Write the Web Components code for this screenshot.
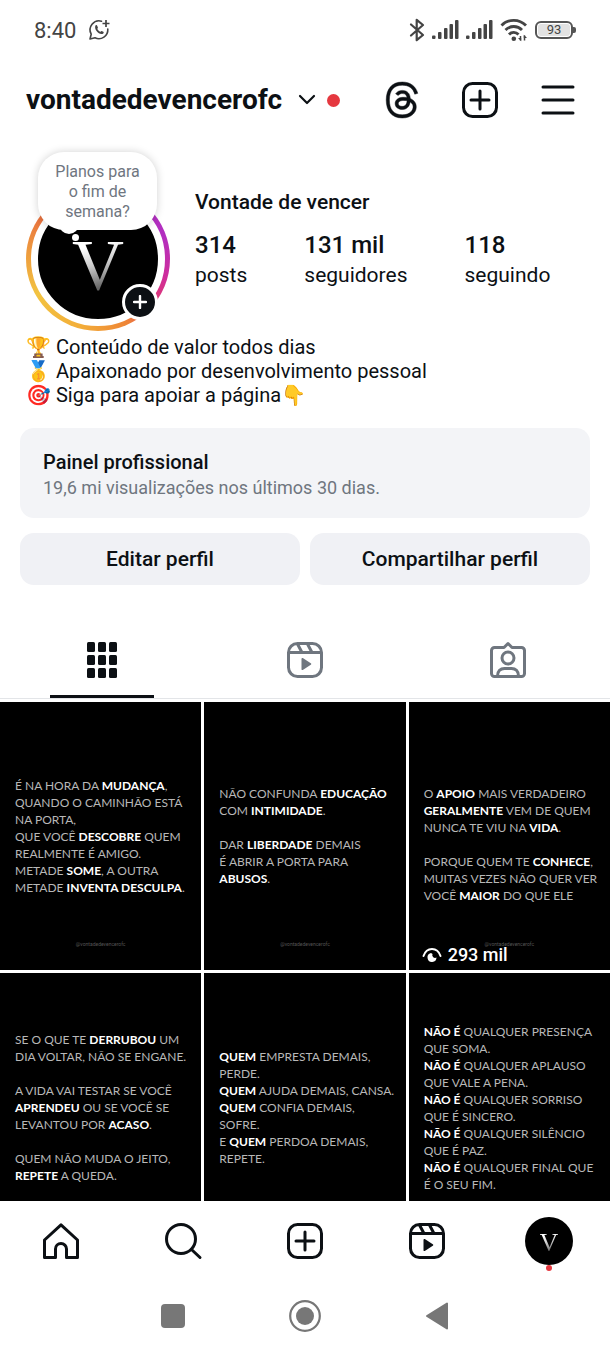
<!DOCTYPE html>
<html lang="pt-BR">
<head>
<meta charset="utf-8">
<meta name="viewport" content="width=device-width, initial-scale=1">
<title>vontadedevencerofc</title>
<style>
  :root {
    --ink: #0c1014;
    --muted: #6f767f;
    --surface: #f3f4f7;
    --red: #e5383f;
  }
  body {
    margin: 0;
    background: #fff;
    color: var(--ink);
    font-family: Roboto, "Liberation Sans", sans-serif;
  }
</style>
</head>
<body>
<app-shell>
  <status-bar slot="top" time="8:40" battery="93"></status-bar>
  <account-bar slot="top" user="vontadedevencerofc"></account-bar>

  <profile-summary name="Vontade de vencer">
    <profile-avatar slot="avatar">Planos para<br>o fim de<br>semana?</profile-avatar>
    <stat-item value="314">posts</stat-item>
    <stat-item value="131 mil">seguidores</stat-item>
    <stat-item value="118">seguindo</stat-item>
  </profile-summary>
  <profile-bio>
    <div>🏆 Conteúdo de valor todos dias</div>
    <div>🥇 Apaixonado por desenvolvimento pessoal</div>
    <div>🎯 Siga para apoiar a página👇</div>
  </profile-bio>
  <pro-panel heading="Painel profissional">19,6 mi visualizações nos últimos 30 dias.</pro-panel>
  <profile-actions></profile-actions>
  <profile-tabs></profile-tabs>
  <post-grid>
    <post-tile>É NA HORA DA <b>MUDANÇA</b>,<br>QUANDO O CAMINHÃO ESTÁ<br>NA PORTA,<br>QUE VOCÊ <b>DESCOBRE</b> QUEM<br>REALMENTE É AMIGO.<br>METADE <b>SOME</b>, A OUTRA<br>METADE <b>INVENTA DESCULPA</b>.</post-tile>
    <post-tile>NÃO CONFUNDA <b>EDUCAÇÃO</b><br>COM <b>INTIMIDADE</b>.<br><br>DAR <b>LIBERDADE</b> DEMAIS<br>É ABRIR A PORTA PARA<br><b>ABUSOS</b>.</post-tile>
    <post-tile views="293 mil"><br>O <b>APOIO</b> MAIS VERDADEIRO<br><b>GERALMENTE</b> VEM DE QUEM<br>NUNCA TE VIU NA <b>VIDA</b>.<br><br>PORQUE QUEM TE <b>CONHECE</b>,<br>MUITAS VEZES NÃO QUER VER<br>VOCÊ <b>MAIOR</b> DO QUE ELE</post-tile>
    <post-tile>SE O QUE TE <b>DERRUBOU</b> UM<br>DIA VOLTAR, NÃO SE ENGANE.<br><br>A VIDA VAI TESTAR SE VOCÊ<br><b>APRENDEU</b> OU SE VOCÊ SE<br>LEVANTOU POR <b>ACASO</b>.<br><br>QUEM NÃO MUDA O JEITO,<br><b>REPETE</b> A QUEDA.</post-tile>
    <post-tile><b>QUEM</b> EMPRESTA DEMAIS,<br>PERDE.<br><b>QUEM</b> AJUDA DEMAIS, CANSA.<br><b>QUEM</b> CONFIA DEMAIS,<br>SOFRE.<br>E <b>QUEM</b> PERDOA DEMAIS,<br>REPETE.</post-tile>
    <post-tile><b>NÃO É</b> QUALQUER PRESENÇA<br>QUE SOMA.<br><b>NÃO É</b> QUALQUER APLAUSO<br>QUE VALE A PENA.<br><b>NÃO É</b> QUALQUER SORRISO<br>QUE É SINCERO.<br><b>NÃO É</b> QUALQUER SILÊNCIO<br>QUE É PAZ.<br><b>NÃO É</b> QUALQUER FINAL QUE<br>É O SEU FIM.</post-tile>
  </post-grid>

  <bottom-nav slot="bottom"></bottom-nav>
  <system-nav slot="bottom"></system-nav>
</app-shell>

<script>
// name: [width, height, viewBox, markup]
const ICONS = {
  whatsapp: [22, 22, '0 0 22 22', `
    <path d="M13.5 2.2A9 9 0 0 0 3.2 15.2L2 20l5-1.2A9 9 0 0 0 19.8 10" fill="none" stroke="currentColor" stroke-width="1.6" stroke-linejoin="round" stroke-linecap="round"/>
    <path d="M18 1v7M14.500 4.500h7" stroke="currentColor" stroke-width="1.700"/>
    <path d="M7.500 6.500c.7-.7 1.500-.4 1.800.4l.6 1.500c.2.600-.8 1.200-.6 1.700.6 1.200 1.500 2 2.700 2.600.5.200 1.100-1 1.700-.8l1.600.8c.8.500.4 1.500-.3 2-3.500 2-9.500-4.500-7.500-8.200z" fill="currentColor"/>`],
  bluetooth: [16, 24, '0 0 16 24', `
    <path d="M2 6.500l12 10.500-6.300 5.200V1.800L14 7 2 17.500" fill="none" stroke="currentColor" stroke-width="2.200" stroke-linejoin="round" stroke-linecap="round"/>`],
  signal: [27, 20, '0 0 27 20', `
    <g fill="currentColor"><rect y="15.500" width="3.500" height="3.500" rx="1"/><rect x="6" y="12" width="3.500" height="7" rx="1"/><rect x="12" y="8" width="3.500" height="11" rx="1"/><rect x="17.500" y="4" width="3.500" height="15" rx="1"/><rect x="23" width="3.500" height="19" rx="1"/></g>`],
  wifi: [28, 24, '0 0 28 24', `
    <g fill="none" stroke="currentColor" stroke-width="2.800"><path d="M1.500 7.500a17 17 0 0 1 24.500 0"/><path d="M5.500 12a11.500 11.500 0 0 1 16.500 0"/><path d="M9 16.500a6.500 6.500 0 0 1 9.500 0"/></g>
    <circle cx="13.800" cy="20.800" r="2.300" fill="currentColor"/>
    <path d="M20.500 22.500v-4.500M24.500 17.500v5" stroke="currentColor" stroke-width="1.500"/><path d="M18 20h3.200v3.200zM27 20h-3.200v-3.200z" fill="currentColor"/>`],
  chevron: [18, 12, '0 0 18 12', `
    <path d="M2 2l7 7 7-7" fill="none" stroke="currentColor" stroke-width="2.200" stroke-linecap="round" stroke-linejoin="round"/>`],
  threads: [36, 36, '0 0 24 24', `
    <path stroke="currentColor" stroke-width=".3" d="M12.186 24h-.007c-3.581-.024-6.334-1.205-8.184-3.509C2.350 18.440 1.500 15.586 1.472 12.010v-.017c.03-3.579.879-6.430 2.525-8.482C5.845 1.205 8.600.024 12.180 0h.014c2.746.02 5.043.725 6.826 2.098 1.677 1.290 2.858 3.130 3.509 5.467l-2.040.569c-1.104-3.960-3.898-5.984-8.304-6.015-2.910.022-5.110.936-6.540 2.717C4.307 6.504 3.616 8.914 3.589 12c.027 3.086.718 5.496 2.057 7.164 1.430 1.783 3.631 2.698 6.540 2.717 2.623-.02 4.358-.631 5.800-2.045 1.647-1.613 1.618-3.593 1.090-4.798-.31-.71-.873-1.300-1.634-1.750-.192 1.352-.622 2.446-1.284 3.272-.886 1.102-2.140 1.704-3.730 1.790-1.202.065-2.361-.218-3.259-.801-1.063-.689-1.685-1.740-1.752-2.964-.065-1.190.408-2.285 1.330-3.082.88-.76 2.119-1.207 3.583-1.291a13.853 13.853 0 0 1 3.020.142c-.126-.742-.375-1.332-.75-1.757-.513-.586-1.308-.883-2.359-.89h-.029c-.844 0-1.992.232-2.721 1.320L7.734 7.847c.98-1.454 2.568-2.256 4.478-2.256h.044c3.194.02 5.097 1.975 5.287 5.388.108.046.216.094.321.142 1.490.7 2.580 1.761 3.154 3.070.797 1.820.871 4.790-1.548 7.158-1.850 1.810-4.094 2.628-7.277 2.650Zm1.003-11.690c-.242 0-.487.007-.739.021-1.836.103-2.980.946-2.916 2.143.067 1.256 1.452 1.839 2.784 1.767 1.224-.065 2.818-.543 3.086-3.710a10.500 10.500 0 0 0-2.215-.221z" fill="currentColor"/>`],
  add: [36, 36, '0 0 36 36', `
    <g fill="none" stroke="currentColor" stroke-width="3" stroke-linecap="round"><rect x="1.500" y="1.500" width="33" height="33" rx="9"/><path d="M18 9v18M9 18h18"/></g>`],
  menu: [36, 36, '0 0 36 36', `
    <path d="M3 5h30M3 18h30M3 31h30" stroke="currentColor" stroke-width="3" stroke-linecap="round"/>`],
  grid: [30, 36, '0 0 30 36', `
    <g fill="currentColor">${[0, 13, 26].map(y => [0, 11, 22].map(x => `<rect x="${x}" y="${y}" width="8" height="10" rx="1.500"/>`).join('')).join('')}</g>`],
  reels: [36, 36, '0 0 36 36', `
    <g fill="none" stroke="currentColor" stroke-width="3" stroke-linejoin="round"><rect x="1.500" y="1.500" width="33" height="33" rx="9"/><path d="M2 10.500h32M10.500 2l4.500 8.500M20.500 2l4.500 8.500"/></g>
    <path d="M14.500 16.800v10.400c0 .8.7 1.100 1.300.8l8-5.200c.6-.4.600-1.200 0-1.600l-8-5.200c-.6-.3-1.300 0-1.300.800z" fill="currentColor"/>`],
  tagged: [36, 36, '0 0 36 36', `
    <g fill="none" stroke="currentColor" stroke-width="3" stroke-linejoin="round"><path d="M18 1.500l4 4h9.500a3 3 0 0 1 3 3v23a3 3 0 0 1-3 3h-27a3 3 0 0 1-3-3v-23a3 3 0 0 1 3-3H14z"/><circle cx="18" cy="16" r="6"/><path d="M7.500 34c0-5 3-7.500 7-7.500h7c4 0 7 2.500 7 7.500"/></g>`],
  home: [36, 36, '0 0 36 36', `
    <path d="M18 1.800L34.500 17v17.500H23.500V26a5.500 5.500 0 0 0-11 0v8.500H1.500V17z" fill="none" stroke="currentColor" stroke-width="3" stroke-linejoin="round"/>`],
  search: [36, 36, '0 0 36 36', `
    <g fill="none" stroke="currentColor" stroke-width="3" stroke-linecap="round"><circle cx="16" cy="16" r="14.500"/><path d="M26.500 26.500L35 34.500"/></g>`],
  eye: [20, 16, '0 0 20 16', `
    <path d="M1.500 9C3 4.500 6 2 10 2s7 2.500 8.500 7" fill="none" stroke="currentColor" stroke-width="2" stroke-linecap="round"/>
    <path d="M9 6a4.500 4.500 0 1 0 5.500 4.500 2.800 2.800 0 0 1-4-3.500z" fill="currentColor"/>`],
  square: [24, 24, '0 0 24 24', `<rect x="0" y="0" width="24" height="24" rx="4" fill="currentColor"/>`],
  circle: [32, 32, '0 0 32 32', `
    <circle cx="16" cy="16" r="14.800" fill="none" stroke="currentColor" stroke-width="2.200"/><circle cx="16" cy="16" r="9" fill="currentColor"/>`],
  back: [24, 28, '0 0 24 28', `
    <path d="M22 1.500v25L2 14z" fill="currentColor" stroke="currentColor" stroke-width="2" stroke-linejoin="round"/>`],
};

const BUTTON_RESET = `
  button, a { display: inline-flex; align-items: center; justify-content: center; padding: 0; border: 0;
    background: none; color: inherit; font: inherit; text-decoration: none; cursor: pointer; }
`;

// Shared base: subclasses return their shadow markup from view()
class BaseElement extends HTMLElement {
  connectedCallback() {
    if (this.shadowRoot) return;
    this.attachShadow({ mode: 'open' }).innerHTML = this.view();
  }
  attr(name) { return this.getAttribute(name) || ''; }
}

customElements.define('app-icon', class extends BaseElement {
  view() {
    const [w, h, box, markup] = ICONS[this.attr('name')];
    return `
      <style>:host { display: inline-flex; flex: none; } svg { display: block; overflow: visible; }</style>
      <svg width="${w}" height="${h}" viewBox="${box}" aria-hidden="true">${markup}</svg>`;
  }
});

customElements.define('app-shell', class extends BaseElement {
  view() {
    return `
      <style>
        :host { display: flex; flex-direction: column; height: 100vh; }
        header, footer { flex: none; }
        main { flex: 1; min-height: 0; overflow: hidden; }
      </style>
      <header><slot name="top"></slot></header>
      <main><slot></slot></main>
      <footer><slot name="bottom"></slot></footer>`;
  }
});

customElements.define('status-bar', class extends BaseElement {
  view() {
    return `
      <style>
        :host { display: flex; align-items: center; height: 60px; padding: 0 34px; color: #444; }
        .time { font-size: 22px; margin-right: 12px; }
        .right { display: flex; align-items: center; gap: 7px; margin-left: auto; }
        .battery { display: flex; align-items: center; }
        .cell { box-sizing: border-box; width: 38px; height: 18px; padding: 1px; border: 2px solid #555; border-radius: 6px;
          font-size: 13px; line-height: 12px; text-align: center; }
        .cell span { display: block; background: #e2e2e2; border-radius: 3px; }
        .tip { width: 3px; height: 6px; background: #555; border-radius: 0 2px 2px 0; }
      </style>
      <span class="time">${this.attr('time')}</span>
      <app-icon name="whatsapp"></app-icon>
      <div class="right">
        <app-icon name="bluetooth"></app-icon>
        <app-icon name="signal"></app-icon>
        <app-icon name="signal"></app-icon>
        <app-icon name="wifi"></app-icon>
        <div class="battery"><div class="cell"><span>${this.attr('battery')}</span></div><div class="tip"></div></div>
      </div>`;
  }
});

customElements.define('account-bar', class extends BaseElement {
  view() {
    return `
      <style>
        ${BUTTON_RESET}
        :host { display: flex; align-items: center; height: 80px; padding: 0 34px 0 26px; }
        .user { font-size: 28px; font-weight: 700; line-height: 36px; }
        .user app-icon { margin: 0 11px 0 16px; }
        .dot { width: 13px; height: 13px; border-radius: 50%; background: var(--red); }
        nav { display: flex; gap: 42px; margin-left: auto; }
      </style>
      <button class="user">${this.attr('user')}<app-icon name="chevron"></app-icon><span class="dot"></span></button>
      <nav>
        <button aria-label="Threads"><app-icon name="threads"></app-icon></button>
        <button aria-label="Criar"><app-icon name="add"></app-icon></button>
        <button aria-label="Menu"><app-icon name="menu"></app-icon></button>
      </nav>`;
  }
});

customElements.define('brand-photo', class extends BaseElement {
  view() {
    return `
      <style>
        :host { display: flex; align-items: center; justify-content: center; border-radius: 50%; background: #000; }
        span { padding-top: 10%; font-family: "Liberation Serif", serif; line-height: 1;
          background: linear-gradient(165deg, #fff 35%, #ccc 55%, #666 80%); background-clip: text; -webkit-background-clip: text; color: transparent; }
      </style>
      <span>V</span>`;
  }
});

customElements.define('profile-avatar', class extends BaseElement {
  view() {
    return `
      <style>
        ${BUTTON_RESET}
        :host { display: block; position: relative; margin-top: 47px; }
        .ring { box-sizing: border-box; width: 144px; height: 144px; padding: 5px; border-radius: 50%;
          background: conic-gradient(#b22fc0, #b22fc0 70deg, #cf2d9b 105deg, #e03a6c 130deg, #ee8436 155deg, #f3ae39 195deg, #f2c341 240deg, #ee9c3e 275deg, #e9733f 305deg, #e9733f); }
        brand-photo { width: 120px; height: 120px; border: 7px solid #fff; font-size: 72px; }
        .note { position: absolute; left: 12px; top: -35px; box-sizing: border-box; width: 119px; padding: 10px 0 8px;
          border-radius: 26px; background: #fff; box-shadow: 0 0 8px #0000002e; color: var(--muted);
          font-size: 16px; line-height: 20px; text-align: center; clip-path: inset(-10px -10px 0 -10px); }
        .tail { position: absolute; left: 33px; top: 36px; width: 20px; height: 11px; border-radius: 0 0 10px 10px; background: #fff; }
        .drop { position: absolute; left: 46px; top: 47px; width: 7px; height: 7px; border-radius: 50%; background: #fff; }
        .plus { position: absolute; right: 12px; bottom: 11px; width: 36px; height: 36px; border: 3px solid #fff;
          box-sizing: border-box; border-radius: 50%; background: var(--ink); color: #fff; }
      </style>
      <div class="ring"><brand-photo></brand-photo></div>
      <div class="tail"></div><div class="drop"></div>
      <div class="note"><slot></slot></div>
      <button class="plus" aria-label="Adicionar story">
        <svg width="14" height="14" viewBox="0 0 14 14"><path d="M7 1v12M1 7h12" stroke="#fff" stroke-width="2.400" stroke-linecap="round"/></svg>
      </button>`;
  }
});

customElements.define('profile-summary', class extends BaseElement {
  view() {
    return `
      <style>
        :host { display: flex; align-items: flex-end; gap: 25px; padding: 0 26px; }
        .info { padding-bottom: 42px; }
        h1 { margin: 0 0 15px; font-size: 21px; line-height: 24px; font-weight: 500; }
        .stats { display: flex; gap: 57px; }
      </style>
      <slot name="avatar"></slot>
      <div class="info">
        <h1>${this.attr('name')}</h1>
        <div class="stats"><slot></slot></div>
      </div>`;
  }
});

customElements.define('stat-item', class extends BaseElement {
  view() {
    return `
      <style>
        :host { display: block; font-size: 21px; line-height: 28px; }
        strong { display: block; font-size: 24px; line-height: 32px; font-weight: 500; }
      </style>
      <strong>${this.attr('value')}</strong><slot></slot>`;
  }
});

customElements.define('profile-bio', class extends BaseElement {
  view() {
    return `
      <style>:host { display: block; margin: 4px 26px 21px; font-size: 20px; line-height: 24px; }</style>
      <slot></slot>`;
  }
});

customElements.define('pro-panel', class extends BaseElement {
  view() {
    return `
      <style>
        :host { display: block; margin: 0 20px 15px; padding: 20px 23px 18px; border-radius: 14px; background: var(--surface); }
        h2 { margin: 0; font-size: 20px; line-height: 28px; font-weight: 500; }
        p { margin: 0; font-size: 18px; line-height: 24px; color: var(--muted); }
      </style>
      <h2>${this.attr('heading')}</h2>
      <p><slot></slot></p>`;
  }
});

customElements.define('profile-actions', class extends BaseElement {
  view() {
    return `
      <style>
        :host { display: grid; grid-template-columns: 1fr 1fr; gap: 10px; margin: 0 20px; }
        button { height: 52px; border: 0; border-radius: 14px; background: #f0f1f5; color: inherit;
          font: 500 21px/24px Roboto, "Liberation Sans", sans-serif; cursor: pointer; }
      </style>
      <button>Editar perfil</button>
      <button>Compartilhar perfil</button>`;
  }
});

customElements.define('profile-tabs', class extends BaseElement {
  view() {
    return `
      <style>
        ${BUTTON_RESET}
        :host { display: grid; grid-template-columns: repeat(3, 1fr); margin: 36px 0 3px; border-bottom: 1px solid #e3e5e8; color: var(--muted); }
        button { box-sizing: border-box; width: 104px; height: 77px; padding-top: 4px; border-bottom: 3px solid transparent; justify-self: center; }
        .active { color: var(--ink); border-color: var(--ink); }
      </style>
      <button class="active" aria-label="Posts"><app-icon name="grid"></app-icon></button>
      <button aria-label="Reels"><app-icon name="reels"></app-icon></button>
      <button aria-label="Marcados"><app-icon name="tagged"></app-icon></button>`;
  }
});

customElements.define('post-grid', class extends BaseElement {
  view() {
    return `
      <style>:host { display: grid; grid-template-columns: repeat(3, 1fr); gap: 3px; }</style>
      <slot></slot>`;
  }
});

customElements.define('post-tile', class extends BaseElement {
  view() {
    const views = this.attr('views');
    return `
      <style>
        :host { position: relative; display: flex; align-items: center; aspect-ratio: 3 / 4; min-width: 0; background: #000; color: #fff; }
        p { margin: 0 0 0 15px; font: 400 12px/17px Lato, "Open Sans", sans-serif; white-space: nowrap; color: #b8b8b8; }
        ::slotted(b) { font-weight: 700; color: #fff; }
        .mark { position: absolute; left: 0; right: 0; bottom: 22px; font-size: 5px; line-height: 8px; text-align: center; color: #555; }
        .views { position: absolute; left: 13px; bottom: 4px; display: flex; align-items: center; gap: 6px; font-size: 18px; line-height: 22px; font-weight: 500; }
      </style>
      <p><slot></slot></p>
      <span class="mark">@vontadedevencerofc</span>
      ${views ? `<span class="views"><app-icon name="eye"></app-icon>${views}</span>` : ''}`;
  }
});

customElements.define('bottom-nav', class extends BaseElement {
  view() {
    return `
      <style>
        ${BUTTON_RESET}
        :host { display: grid; grid-template-columns: repeat(5, 1fr); height: 79px; background: #fff; }
        a { position: relative; }
        brand-photo { width: 48px; height: 48px; font-size: 26px; }
        .dot { position: absolute; bottom: 9px; width: 6px; height: 6px; border-radius: 50%; background: var(--red); }
      </style>
      <a href="#home" aria-label="Início"><app-icon name="home"></app-icon></a>
      <a href="#search" aria-label="Pesquisar"><app-icon name="search"></app-icon></a>
      <a href="#new" aria-label="Criar"><app-icon name="add"></app-icon></a>
      <a href="#reels" aria-label="Reels"><app-icon name="reels"></app-icon></a>
      <a href="#profile" aria-label="Perfil"><brand-photo></brand-photo><span class="dot"></span></a>`;
  }
});

customElements.define('system-nav', class extends BaseElement {
  view() {
    return `
      <style>
        ${BUTTON_RESET}
        :host { display: flex; justify-content: center; gap: 100px; height: 72px; padding-bottom: 4px; background: #fff; color: #777; }
        button { width: 32px; }
      </style>
      <button aria-label="Recentes"><app-icon name="square"></app-icon></button>
      <button aria-label="Tela inicial"><app-icon name="circle"></app-icon></button>
      <button aria-label="Voltar"><app-icon name="back"></app-icon></button>`;
  }
});
</script>
</body>
</html>
